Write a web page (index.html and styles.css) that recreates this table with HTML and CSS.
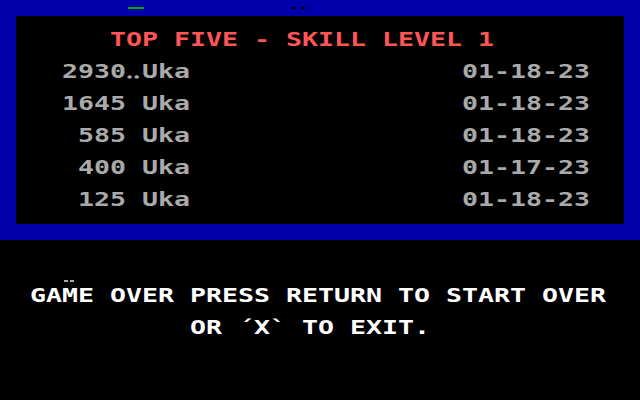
FILE: index.html
```html
<!DOCTYPE html>
<html lang="en">
<head>
  <meta charset="UTF-8">
  <title>Top Five - Skill Level 1</title>
  <link rel="stylesheet" href="styles.css">
</head>
<body>
  <div class="screen">
    <!-- blue score panel -->
    <div class="frame">
      <div class="status-strip">
        <span class="mark mark-green"></span>
        <span class="mark-pair">
          <span class="mark mark-dark"></span>
          <span class="mark mark-dark"></span>
        </span>
      </div>
      <div class="board">
        <div class="line title">TOP FIVE - SKILL LEVEL 1</div>
        <div class="line score-row"><span class="score">2930</span><span class="sep">‥</span><span class="name">Uka</span><span class="date">01-18-23</span></div>
        <div class="line score-row"><span class="score">1645</span><span class="sep"> </span><span class="name">Uka</span><span class="date">01-18-23</span></div>
        <div class="line score-row"><span class="score">585</span><span class="sep"> </span><span class="name">Uka</span><span class="date">01-18-23</span></div>
        <div class="line score-row"><span class="score">400</span><span class="sep"> </span><span class="name">Uka</span><span class="date">01-17-23</span></div>
        <div class="line score-row"><span class="score">125</span><span class="sep"> </span><span class="name">Uka</span><span class="date">01-18-23</span></div>
      </div>
    </div>

    <!-- game over prompt -->
    <div class="message">
      <div class="cursor-marks">
        <span class="mark mark-grey"></span>
        <span class="mark mark-grey"></span>
      </div>
      <div class="line prompt">GAME OVER PRESS RETURN TO START OVER</div>
      <div class="line prompt prompt-exit">OR ´X` TO EXIT.</div>
    </div>
  </div>
</body>
</html>
```

FILE: styles.css
```css
body {
  margin: 0;
  padding: 0;
  background-color: #000;
}

.screen {
  width: 640px;
  height: 400px;
  background-color: #000;
  overflow: hidden;
}

/* text mode: 40 columns of 16px, glyphs stretched to fill a cell */
.line {
  font-family: "DejaVu Sans Mono", "Liberation Mono", monospace;
  font-weight: bold;
  font-size: 19px;
  line-height: 16px;
  height: 16px;
  white-space: pre;
  transform: translate(-2px, -1px) scaleX(1.3986);
  transform-origin: left center;
}

.frame {
  background-color: #0000aa;
  padding: 0 16px 16px 16px;
}

.status-strip {
  height: 16px;
  display: flex;
  align-items: center;
}

.mark {
  display: block;
  width: 4px;
  height: 2px;
}

.mark-green {
  width: 16px;
  background-color: #00aa00;
  margin-left: 112px;
}

.mark-pair {
  display: flex;
  gap: 5px;
  margin-left: 148px;
}

.mark-dark {
  background-color: #000;
}

.board {
  background-color: #000;
  height: 208px;
  box-sizing: border-box;
  padding-top: 16px;
  display: flex;
  flex-direction: column;
  gap: 16px;
}

.title {
  color: #ff5555;
  padding-left: 6ch;
}

.score-row {
  color: #aaaaaa;
  display: grid;
  grid-template-columns: 7ch 1ch 20ch 8ch;
}

.score {
  text-align: right;
}

.message {
  padding-top: 40px;
  display: flex;
  flex-direction: column;
  gap: 16px;
}

.cursor-marks {
  display: flex;
  gap: 2px;
  height: 2px;
  margin-left: 64px;
  margin-bottom: -10px;
}

.mark-grey {
  background-color: #aaaaaa;
}

.prompt {
  color: #fff;
  padding-left: 2ch;
}

.prompt-exit {
  padding-left: 12ch;
}
```
